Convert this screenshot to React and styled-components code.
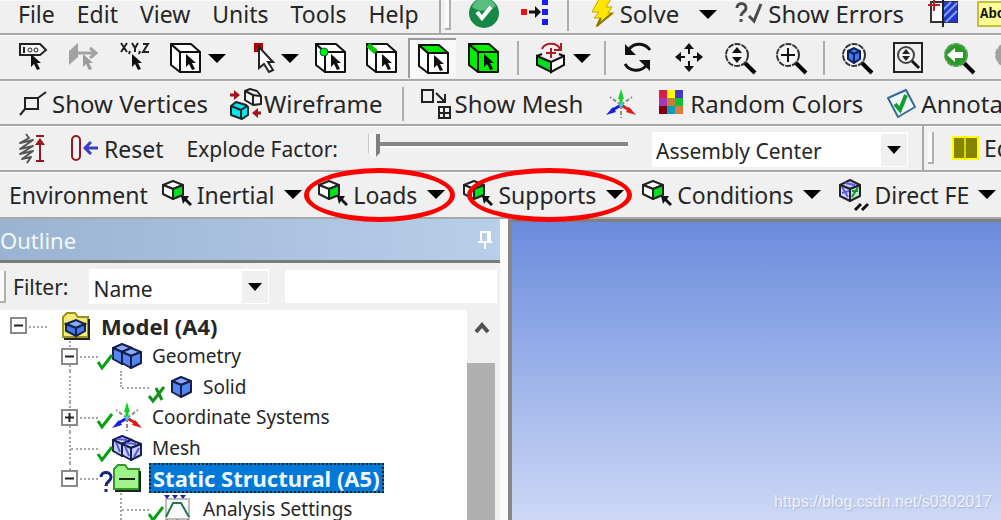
import React, { useState } from 'react';
import styled, { createGlobalStyle, css } from 'styled-components';

const GlobalStyle = createGlobalStyle`
  * {
    box-sizing: border-box;
  }
  body {
    margin: 0;
    background: #f0f0f0;
    overflow: hidden;
  }
`;

const Page = styled.div`
  display: flex;
  flex-direction: column;
  height: 100vh;
  overflow: hidden;
  color: #262626;
  font-family: 'Noto Sans', 'Open Sans', sans-serif;
  font-size: 23px;
  line-height: 28px;
`;

const Band = styled.div`
  display: flex;
  flex: none;
`;

const Toolbar = styled.div`
  display: flex;
  flex: ${(p) => (p.$grow ? '1 0 auto' : 'none')};
  align-items: center;
  height: ${(p) => p.$height || 46}px;
  padding: ${(p) => p.$pad || '0'};
  border-bottom: 2px solid #a8a8a8;
  border-right: ${(p) => (p.$edge ? '2px solid #a8a8a8' : 'none')};
  box-shadow: inset 0 1px 0 #fafafa;
  font-size: ${(p) => (p.$large ? 24 : 23)}px;
  white-space: nowrap;
`;

const Tool = styled.button`
  display: flex;
  flex: none;
  align-items: center;
  gap: ${(p) => p.$gap || 4}px;
  margin: 0 0 0 ${(p) => p.$ml || 0}px;
  padding: 0;
  border: 0;
  background: none;
  color: inherit;
  font: inherit;
  position: relative;
  ${(p) =>
    p.$pressed &&
    css`
      height: 40px;
      margin: 0 -7px 0 10px;
      padding: 0 6px 0 8px;
      border: solid #9c9c9c;
      border-width: 2px 0 0 2px;
      background: #f8f8f8;
    `}
`;

const Tail = styled.span`
  margin-left: 5px;
`;

const Divider = styled.span`
  flex: none;
  width: 2px;
  height: 34px;
  margin-left: ${(p) => p.$ml || 0}px;
  background: #adadad;
`;

const Grip = styled.span`
  flex: none;
  width: 6px;
  height: 32px;
  margin-left: ${(p) => p.$ml || 0}px;
  border: solid #b0b0b0;
  border-width: 0 2px 2px 0;
  background: #fafafa;
`;

const Svg = styled.svg`
  display: block;
  flex: none;
  overflow: visible;
`;

const Label = styled.label`
  flex: none;
  margin-left: ${(p) => p.$ml || 0}px;
  font-size: 21px;
`;

const Ring = styled.span`
  position: absolute;
  inset: ${(p) => (p.$inner ? '-12px -8px -12px 4px' : '-12px -10px -12px -14px')};
  border: 5px solid #fe0000;
  border-radius: 50%;
  pointer-events: none;
  z-index: 2;
`;

const Slider = styled.input`
  appearance: none;
  flex: none;
  width: 260px;
  height: 30px;
  margin: 0 0 8px ${(p) => p.$ml}px;
  background: none;
  &::-webkit-slider-runnable-track {
    height: 6px;
    border-top: 4px solid #868686;
    border-bottom: 2px solid #fcfcfc;
  }
  &::-webkit-slider-thumb {
    appearance: none;
    width: 12px;
    height: 25px;
    margin-top: -12px;
    background: linear-gradient(90deg, #c8c8c8 1px, #f6f6f6 1px, #f6f6f6 8px, #7e7e7e 8px);
    clip-path: polygon(0 0, 100% 0, 100% 75%, 50% 100%, 0 75%);
  }
`;

const SelectBox = styled.span`
  display: flex;
  flex: none;
  position: relative;
  width: ${(p) => p.$width}px;
  height: 35px;
  margin-left: ${(p) => p.$ml}px;
  background: #fff;
  &::after {
    content: '';
    position: absolute;
    top: 2px;
    right: 1px;
    width: 26px;
    height: 32px;
    background: #f0f0f0;
    pointer-events: none;
  }
  svg {
    position: absolute;
    top: 14px;
    right: 7px;
    z-index: 1;
    pointer-events: none;
  }
`;

const Select = styled.select`
  appearance: none;
  width: 100%;
  padding: 4px 4px 0;
  border: 0;
  background: none;
  color: inherit;
  font: inherit;
  font-size: 21px;
`;

const Main = styled.div`
  display: flex;
  flex: 1;
  min-height: 0;
`;

const Panel = styled.aside`
  display: flex;
  flex: none;
  flex-direction: column;
  width: 500px;
`;

const PanelTitle = styled.h2`
  display: flex;
  flex: none;
  align-items: center;
  justify-content: space-between;
  height: 44px;
  margin: 0;
  padding: 0 7px 0 0;
  border-bottom: 3px solid #7b7b7b;
  background: linear-gradient(90deg, #9ab3d0, #b8cfea);
  color: #f4f8fd;
  font-size: 22px;
  font-weight: 400;
`;

const FilterRow = styled.div`
  display: flex;
  flex: none;
  align-items: center;
  height: 47px;
  padding-right: 3px;
`;

const FilterInput = styled.input`
  flex: 1;
  min-width: 0;
  height: 33px;
  margin-left: 16px;
  border: 0;
  background: #fff;
  font: inherit;
`;

const TreeArea = styled.div`
  display: flex;
  flex: 1;
  min-height: 0;
  padding-right: 3px;
`;

const Tree = styled.ul`
  flex: 1;
  margin: 0;
  padding: 0;
  overflow: hidden;
  background: #fff;
  list-style: none;
  font-size: 19px;
  line-height: 20px;
`;

const TreeRow = styled.li`
  display: flex;
  align-items: center;
  height: 31px;
  white-space: nowrap;
  &:nth-child(even) {
    height: 30px;
  }
`;

const Guide = styled.span`
  display: flex;
  flex: none;
  align-items: center;
  align-self: stretch;
  position: relative;
  width: 51px;
  &::before {
    content: '';
    position: absolute;
    left: 18px;
    top: 0;
    bottom: ${(p) => (p.$end ? '50%' : '0')};
    border-left: ${(p) => (p.$line ? '2px dotted #a6a6a6' : '0')};
  }
  &::after {
    content: '';
    position: absolute;
    left: 20px;
    right: 4px;
    top: 50%;
    border-top: ${(p) => (p.$branch ? '2px dotted #a6a6a6' : '0')};
  }
`;

const Expander = styled.button`
  position: relative;
  z-index: 1;
  width: 17px;
  height: 17px;
  margin-left: 10px;
  padding: 0;
  border: 2px solid #8a8a8a;
  background: #fff;
  svg {
    width: 13px;
    height: 13px;
  }
`;

const NodeIcon = styled.span`
  display: flex;
  flex: none;
  justify-content: center;
  position: relative;
  width: 30px;
  margin: 0 10px;
`;

const Status = styled.span`
  position: absolute;
  left: -15px;
  top: 10px;
`;

const NodeText = styled.span`
  ${(p) =>
    p.$bold &&
    css`
      font-size: 22px;
      font-weight: 700;
    `}
  ${(p) =>
    p.$selected &&
    css`
      margin-left: -3px;
      padding: 0 2px;
      line-height: 26px;
      border: 2px dotted #222;
      background: #0078d7;
      color: #eef6ff;
    `}
`;

const Scrollbar = styled.div`
  display: flex;
  flex: none;
  flex-direction: column;
  width: 30px;
  background: #f0f0f0;
`;

const ScrollUp = styled.button`
  display: flex;
  align-items: center;
  justify-content: center;
  height: 53px;
  padding: 0 0 18px;
  border: 0;
  background: none;
`;

const ScrollThumb = styled.div`
  flex: 1;
  width: 28px;
  background: #b0b0b0;
`;

const Splitter = styled.div`
  flex: none;
  width: 12px;
  border-right: 4px solid #868686;
  background: #fbfbfb;
`;

const Viewport = styled.main`
  display: flex;
  flex: 1;
  align-items: flex-end;
  justify-content: flex-end;
  min-width: 0;
  padding: 0 9px 8px;
  border-top: 3px solid #808080;
  background: linear-gradient(#6b8bdd, #ccd8f5);
`;

const Watermark = styled.span`
  color: #edf1fb;
  font-family: 'Liberation Sans', Arial, sans-serif;
  font-size: 16px;
  line-height: 20px;
  text-shadow: 1px 1px 1px #a9b5d0;
`;

const NoteTag = styled.span`
  width: 40px;
  padding-left: 1px;
  border: 2px solid #c8bc3c;
  background: #ffff96;
  color: #111;
  font: 700 14px/22px 'Liberation Mono', monospace;
  text-align: left;
`;

function Icon({ w = 32, h = 32, children }) {
  return (
    <Svg width={w} height={h} viewBox={`0 0 ${w} ${h}`} fill="none" aria-hidden="true">
      {children}
    </Svg>
  );
}

const Triangle = ({ w = 18, h = 9 }) => (
  <Icon w={w} h={h}>
    <path d={`M0 0H${w}L${w / 2} ${h}z`} fill="#000" />
  </Icon>
);

const Pointer = ({ x = 0, y = 0, fill = '#111' }) => (
  <path d="M0 0v13l3-3 3 6 3-1-3-6h4z" transform={`translate(${x} ${y})`} fill={fill} />
);

function SelectCube({ face, body, vertex, edge }) {
  return (
    <Icon>
      <g stroke="#111" strokeWidth="2" strokeLinejoin="round">
        <path d="M1 2l9 8v20l-9-7z" fill={body || '#fff'} />
        <path d="M1 2h20l9 8H10z" fill={face || body || '#fff'} />
        <path d="M10 10h20v20H10z" fill={body || '#fff'} />
      </g>
      {edge && <path d="M2 3l8 7" stroke="#00c800" strokeWidth="5" />}
      {vertex && <circle cx="9" cy="10" r="4" fill="#00f000" stroke="#064" />}
      <Pointer x={16} y={12} />
    </Icon>
  );
}

const TagIcon = () => (
  <Icon>
    <path d="M3 2h20l6 6-6 5H3z" stroke="#222" strokeWidth="2" fill="#f8f8f8" />
    <path d="M7 5v6" stroke="#222" strokeWidth="2" />
    <circle cx="13" cy="8" r="2" stroke="#222" />
    <circle cx="19" cy="8" r="2" stroke="#222" />
    <Pointer x={14} y={12} />
  </Icon>
);

const DirectionIcon = () => (
  <Icon>
    <path d="M1 9l9-8v14l-9 8z" fill="#a2a2a2" />
    <path d="M10 11h16M22 6l6 5-6 5" stroke="#a2a2a2" strokeWidth="3" />
    <Pointer x={15} y={12} fill="#9a9a9a" />
  </Icon>
);

const CoordIcon = () => (
  <Icon>
    <path
      d="M2 1l6 9M8 1l-6 9M13 1l3 5 3-5M16 6v4M24 2h5l-5 8h6M11 9l-1 3M21 9l-1 3"
      stroke="#222"
      strokeWidth="2"
    />
    <Pointer x={13} y={12} />
  </Icon>
);

const ArrowPickIcon = () => (
  <Icon w={26}>
    <path d="M3 1h9v9H3z" fill="#b00000" />
    <path d="M8 5v21l5-4 5 8 4-2-5-8h5z" fill="#fff" stroke="#222" strokeWidth="2" />
  </Icon>
);

const ExtendIcon = () => (
  <Icon>
    <path d="M2 14l14 6v10L2 23z" fill="#00dc20" stroke="#111" strokeWidth="2" />
    <path d="M16 20l13-6v9l-13 7z" fill="#fff" stroke="#111" strokeWidth="2" />
    <path d="M2 14l5-2M24 12l5 2" stroke="#111" strokeWidth="2" />
    <path d="M7 7c3-7 15-7 18 0M26 1v7h-7M16 6v10M11 11h10" stroke="#b31b24" strokeWidth="2" />
  </Icon>
);

const RotateIcon = () => (
  <Icon>
    <path d="M28 8C23 1 13 0 7 7M3 22c5 8 15 8 21 2" stroke="#111" strokeWidth="3" />
    <path d="M3 2v11h11zM28 29V18H17z" fill="#111" />
  </Icon>
);

const PanIcon = () => (
  <Icon>
    <path d="M16 3v9M16 19v9M4 15h8M20 15h8" stroke="#111" strokeWidth="2" />
    <path d="M16 1l5 6H11zM16 30l5-6H11zM2 15l6-5v10zM30 15l-6-5v10z" fill="#111" />
  </Icon>
);

const Lens = ({ children, fill = '#f6f6f6', stroke = '#333' }) => (
  <Icon>
    <path d="M20 20l11 11" stroke="#000" strokeWidth="4" />
    <circle cx="13" cy="13" r="11" fill={fill} stroke={stroke} strokeWidth="2" strokeDasharray="6 1" />
    {children}
  </Icon>
);

const BoxZoomIcon = () => (
  <Icon>
    <path d="M2 1h28v29H2z" stroke="#222" strokeWidth="2" />
    <circle cx="14" cy="13" r="8" fill="#f8f8f8" stroke="#444" strokeWidth="2" />
    <path d="M14 7l4 5h-8zM14 19l4-5h-8z" fill="#222" />
    <path d="M20 19l7 7" stroke="#111" strokeWidth="3" />
  </Icon>
);

const CheckBallIcon = () => (
  <Icon w={30} h={30}>
    <circle cx="15" cy="14" r="15" fill="#168746" />
    <path d="M3 8a13 13 0 0124-1c-7 5-16 7-24 1z" fill="#58bd7e" />
    <path d="M8 13l5 6 9-11" stroke="#fff" strokeWidth="4" />
  </Icon>
);

const ConnectIcon = () => (
  <Icon w={30} h={30}>
    <path d="M1 10h6v6H1z" fill="#f01010" />
    <path d="M22 0h6v6h-6zM22 10h6v6h-6zM22 20h6v6h-6z" fill="#1520f0" />
    <path d="M9 13h9" stroke="#111" strokeWidth="3" />
    <path d="M15 7l6 6-6 6z" fill="#111" />
  </Icon>
);

const BoltIcon = () => (
  <Icon w={24} h={30}>
    <path d="M8 0h12l-5 8h6l-4 6h6L5 28l4-9H3l5-6H1z" fill="#ffe600" stroke="#c9a500" />
    <path d="M21 14L6 27l4-8" stroke="#8d7600" strokeWidth="2" />
  </Icon>
);

const QueryIcon = () => (
  <Icon w={29} h={24}>
    <path d="M2 6c0-6 9-6 9 0 0 4-5 4-5 8M6 17v3" stroke="#4c4c4c" strokeWidth="3" />
    <path d="M14 14l5 5 7-17" stroke="#4c4c4c" strokeWidth="3" />
  </Icon>
);

const SectionIcon = () => (
  <Icon w={32} h={30}>
    <path d="M4 3h26v20H4z" stroke="#333" strokeWidth="2" fill="#fff" />
    <path d="M16 3h14v20H16z" fill="#2438c8" />
    <path d="M16 11l8-8M16 18L30 4M19 23l11-11" stroke="#7da0ff" strokeWidth="2" />
    <path d="M16 0v28" stroke="#222" strokeWidth="2" />
    <path d="M7 0v12M1 6h12" stroke="#c01e28" strokeWidth="2" />
  </Icon>
);

const VertexIcon = () => (
  <Icon w={28} h={24}>
    <path d="M5 6h13v11H5zM18 6l8-6M5 17l-5 6" stroke="#222" strokeWidth="2" />
  </Icon>
);

const WireIcon = () => (
  <Icon>
    <g stroke="#222" strokeWidth="2" strokeLinejoin="round">
      <path d="M15 3l5-2 7 2 4 5v8l-8 1-8-5z" fill="#f4f4f4" />
      <path d="M15 3l8 4v10M23 7l7 1" />
      <path d="M1 18l5-4 10 3 2 2v8l-6 4-11-4z" fill="#00e8f0" />
      <path d="M1 18l10 4v8M11 22l6-4" />
    </g>
    <path d="M0 7h5M26 25h5" stroke="#a4141c" strokeWidth="3" />
    <path d="M4 2l6 5-6 5zM28 20l-6 5 6 5z" fill="#a4141c" />
  </Icon>
);

const MeshIcon = () => (
  <Icon>
    <path d="M2 2h11v12H2zM19 19h11v11H19zM24 19v11M19 25h11" stroke="#222" strokeWidth="2" />
    <path d="M16 5l8 8M25 6v8h-8" stroke="#222" strokeWidth="2" />
  </Icon>
);

const TriadIcon = () => (
  <Icon w={30} h={30}>
    <path d="M15 16L4 8M15 16l11-8M15 16v13" stroke="#8d8d8d" strokeWidth="2" strokeDasharray="4 2" />
    <path d="M15 16V6" stroke="#12d025" strokeWidth="3" />
    <path d="M15 0l3 10h-6z" fill="#12d025" />
    <path d="M15 16L5 22" stroke="#1722d8" strokeWidth="3" />
    <path d="M0 26l7-8 3 5z" fill="#1722d8" />
    <path d="M15 16l10 6" stroke="#e01a1a" strokeWidth="3" />
    <path d="M30 26l-10-3 3-5z" fill="#e01a1a" />
    <circle cx="15" cy="16" r="2" fill="#2fd8e8" />
  </Icon>
);

const swatches = ['#e01848', '#ffff00', '#4038c8', '#a838b8', '#c08038', '#10c030', '#800010', '#00a0c0', '#e07838'];

const SwatchIcon = () => (
  <Icon w={24} h={24}>
    {swatches.map((c, i) => (
      <rect key={c} x={(i % 3) * 8} y={Math.floor(i / 3) * 8 - 2} width="8" height="8" fill={c} />
    ))}
  </Icon>
);

const AnnotationIcon = () => (
  <Icon w={30} h={30}>
    <path d="M1 9l18-8 9 17-17 10z" fill="#f2f7fb" stroke="#356b98" strokeWidth="2" strokeLinejoin="round" />
    <path d="M8 15l5 6 6-15" stroke="#12a024" strokeWidth="4" />
  </Icon>
);

const SpringIcon = () => (
  <Icon w={28} h={32}>
    <path
      d="M8 1l3 4-9 5 13-3-13 9 13-3-13 8 13-3-11 8 9-2-4 6"
      stroke="#555"
      strokeWidth="2"
      strokeLinejoin="round"
    />
    <path d="M18 3h8M18 28h8M22 7v20" stroke="#981820" strokeWidth="2" />
    <path d="M22 5l5 7H17z" fill="#981820" />
  </Icon>
);

const ResetIcon = () => (
  <Icon w={29} h={28}>
    <rect x="2" y="1" width="8" height="24" rx="4" stroke="#8f1a22" strokeWidth="2" />
    <path d="M28 13H15M21 7l-6 6 6 6" stroke="#3c3ec4" strokeWidth="3" />
  </Icon>
);

const BookIcon = () => (
  <Icon w={27} h={25}>
    <path d="M1 1h25v22H1z" fill="#848400" stroke="#ffff00" strokeWidth="2" />
    <path d="M13 1v22" stroke="#d8d800" strokeWidth="2" />
  </Icon>
);

const LoadIcon = () => (
  <Icon w={30} h={30}>
    <g stroke="#222" strokeWidth="2" strokeLinejoin="round">
      <path d="M1 5l10-4 10 4-10 4z" fill="#fff" />
      <path d="M1 5l10 4v10L1 14z" fill="#fff" />
      <path d="M11 9l10-4v10l-10 4z" fill="#00e020" />
    </g>
    <path d="M19 16h8l-2 3 5 5-2 2-5-5-2 3z" fill="#111" />
  </Icon>
);

const DirectIcon = () => (
  <Icon w={31} h={32}>
    <g stroke="#222" strokeWidth="2" strokeLinejoin="round">
      <path d="M1 6l10-5 10 5-10 4z" fill="#c6c8ff" />
      <path d="M1 6l10 4v12L1 17z" fill="#d6d8ff" />
      <path d="M11 10l10-4v11l-10 5z" fill="#bde8c8" />
    </g>
    <path d="M3 8l6 10M6 4l10 2M3 14l7-2" stroke="#5a5ae8" strokeWidth="2" />
    <path d="M13 18l6-10M13 12h6" stroke="#1d8a3e" strokeWidth="2" />
    <path d="M16 31l6-6M23 31l6-6" stroke="#111" strokeWidth="3" />
  </Icon>
);

const BluePrism = ({ x = 0, y = 0, fill = '#5585f0', top = '#86abff', meshed }) => (
  <g transform={`translate(${x} ${y})`} stroke="#15204e" strokeWidth="2" strokeLinejoin="round">
    <path d="M1 5l9-4 10 4-10 4z" fill={top} />
    <path d="M1 5l9 4v12l-9-5z" fill={fill} />
    <path d="M10 9l10-4v11l-10 5z" fill={fill} />
    {meshed && <path d="M4 7l4 10M13 18l5-9M5 4l10 1" stroke="#5257d8" strokeWidth="2" />}
  </g>
);

const ModelIcon = () => (
  <Icon w={30} h={30}>
    <path d="M2 6l4-4h8l3 4h10v20H2z" fill="#f4ea78" stroke="#9d9023" strokeWidth="2" />
    <path d="M3 28h25V8" stroke="#222" strokeWidth="2" />
    <path d="M5 13l10-4 9 4-9 4z" fill="#86abff" stroke="#15204e" strokeWidth="2" />
    <path d="M5 13l10 4v8L5 20zM24 13l-9 4v8l9-5z" fill="#4679ea" stroke="#15204e" strokeWidth="2" />
  </Icon>
);

const GeometryIcon = () => (
  <Icon w={30} h={26}>
    <BluePrism y={0} />
    <BluePrism x={9} y={4} />
  </Icon>
);

const MeshNodeIcon = () => (
  <Icon w={30} h={26}>
    <BluePrism fill="#c9cbfa" top="#dcdeff" meshed />
    <BluePrism x={9} y={4} fill="#c9cbfa" top="#dcdeff" meshed />
  </Icon>
);

const SolidIcon = () => (
  <Icon w={30} h={22}>
    <BluePrism x={8} />
  </Icon>
);

const FolderIcon = () => (
  <Icon w={30} h={28}>
    <path d="M2 5l4-4h7l3 4h11v20H2z" fill="#a2f28c" stroke="#2c9a24" strokeWidth="2" />
    <path d="M3 27h25V7" stroke="#222" strokeWidth="2" />
    <path d="M7 15h16" stroke="#222" strokeWidth="2" />
  </Icon>
);

const AnalysisIcon = () => (
  <Icon w={28} h={28}>
    <path d="M2 4h23v20H2z" fill="#fafafa" stroke="#bcbcbc" strokeWidth="2" />
    <path d="M2 22L9 8h8l8 14" stroke="#207850" strokeWidth="2" />
    <path d="M0 0h6l-3 4zM8 0h6l-3 4zM16 0h6l-3 4z" fill="#1828a8" />
    <path d="M0 28l3-4 3 4zM10 28l3-4 3 4zM21 28l3-4 3 4z" fill="#b01020" />
  </Icon>
);

const statusIcons = {
  check: <path d="M1 9l4 6L15 2" stroke="#08a010" strokeWidth="3" />,
  cross: <path d="M1 10l4 5L16 1M8 2l6 12" stroke="#129018" strokeWidth="3" />,
  query: <path d="M4 3c0-6 10-6 10 0 0 5-5 4-5 9M9 15v3" stroke="#16247e" strokeWidth="3" />,
};

const nodes = [
  { text: 'Model (A4)', level: 0, open: true, bold: true, icon: ModelIcon },
  { text: 'Geometry', level: 1, open: true, status: 'check', icon: GeometryIcon },
  { text: 'Solid', level: 2, end: true, status: 'cross', icon: SolidIcon },
  { text: 'Coordinate Systems', level: 1, open: false, status: 'check', icon: TriadIcon },
  { text: 'Mesh', level: 1, status: 'check', icon: MeshNodeIcon },
  {
    text: 'Static Structural (A5)',
    level: 1,
    open: true,
    end: true,
    status: 'query',
    icon: FolderIcon,
    bold: true,
    selected: true,
  },
  { text: 'Analysis Settings', level: 2, last: true, status: 'check', icon: AnalysisIcon },
];

function TreeNode({ node }) {
  const NodeGlyph = node.icon;
  return (
    <TreeRow>
      {Array.from({ length: node.level + 1 }, (_, i) => {
        const own = i === node.level;
        return (
          <Guide key={i} $line={own ? node.level > 0 : i > 0 && !node.last} $branch={own} $end={own && node.end}>
            {own && node.open !== undefined && (
              <Expander aria-label={node.open ? 'Collapse' : 'Expand'}>
                <Icon w={13} h={13}>
                  <path d={node.open ? 'M2 6.5h9' : 'M2 6.5h9M6.5 2v9'} stroke="#222" strokeWidth="2" />
                </Icon>
              </Expander>
            )}
          </Guide>
        );
      })}
      <NodeIcon>
        <NodeGlyph />
        {node.status && (
          <Status>
            <Icon w={17} h={19}>{statusIcons[node.status]}</Icon>
          </Status>
        )}
      </NodeIcon>
      <NodeText $bold={node.bold} $selected={node.selected}>
        {node.text}
      </NodeText>
    </TreeRow>
  );
}

const environmentMenus = [
  { text: 'Inertial', ml: 14 },
  { text: 'Loads', ml: 16, ring: true },
  { text: 'Supports', ml: 18, ring: true, inner: true },
  { text: 'Conditions', ml: 18 },
];

function App() {
  const [explode, setExplode] = useState(0);

  return (
    <Page>
      <GlobalStyle />
      <Band>
        <Toolbar as="nav" $height={35} $pad="0 20px 5px 18px" $edge>
          {['File', 'Edit', 'View', 'Units', 'Tools', 'Help'].map((item, i) => (
            <Tool key={item} $ml={i ? 22 : 0}>
              {item}
            </Tool>
          ))}
        </Toolbar>
        <Toolbar $grow $large $height={35} $pad="0 0 5px 4px">
          <Grip />
          <Tool $ml={18} aria-label="Check"><CheckBallIcon /></Tool>
          <Tool $ml={21} aria-label="Connect"><ConnectIcon /></Tool>
          <Divider $ml={17} />
          <Tool $ml={22} $gap={5}><BoltIcon />Solve</Tool>
          <Tool $ml={20} aria-label="Solve options"><Triangle /></Tool>
          <Tool $ml={18}><QueryIcon />Show Errors</Tool>
          <Tool $ml={23} aria-label="Section plane"><SectionIcon /></Tool>
          <Tool $ml={18} aria-label="Annotation text"><NoteTag>Abc</NoteTag></Tool>
        </Toolbar>
      </Band>

      <Toolbar $height={46} $pad="2px 0 0 17px">
        <Tool aria-label="Label"><TagIcon /></Tool>
        <Tool $ml={19} aria-label="Direction"><DirectionIcon /></Tool>
        <Tool $ml={19} aria-label="Coordinates"><CoordIcon /></Tool>
        <Tool $ml={19} $gap={6} aria-label="Select mode"><SelectCube /><Triangle /></Tool>
        <Tool $ml={25} $gap={4} aria-label="Select type"><ArrowPickIcon /><Triangle /></Tool>
        <Tool $ml={16} aria-label="Vertex"><SelectCube vertex /></Tool>
        <Tool $ml={19} aria-label="Edge"><SelectCube edge /></Tool>
        <Tool $pressed aria-label="Face"><SelectCube face="#00e800" /></Tool>
        <Tool $ml={19} aria-label="Body"><SelectCube body="#00f000" /></Tool>
        <Divider $ml={17} />
        <Tool $ml={16} $gap={6} aria-label="Extend"><ExtendIcon /><Triangle /></Tool>
        <Divider $ml={13} />
        <Tool $ml={16} aria-label="Rotate"><RotateIcon /></Tool>
        <Tool $ml={19} aria-label="Pan"><PanIcon /></Tool>
        <Tool $ml={19} aria-label="Zoom">
          <Lens><path d="M13 5l5 6H8zM13 21l5-6H8z" fill="#111" /></Lens>
        </Tool>
        <Tool $ml={19} aria-label="Zoom in">
          <Lens><path d="M13 6v14M6 13h14" stroke="#111" strokeWidth="2" /></Lens>
        </Tool>
        <Divider $ml={16} />
        <Tool $ml={16} aria-label="Fit">
          <Lens>
            <path d="M7 9l6-3 6 3v8l-6 4-6-4z" fill="#3c78ec" stroke="#101e5a" strokeWidth="2" />
            <path d="M7 9l6 3 6-3M13 12v8" stroke="#101e5a" strokeWidth="2" />
          </Lens>
        </Tool>
        <Tool $ml={19} aria-label="Box zoom"><BoxZoomIcon /></Tool>
        <Tool $ml={19} aria-label="Previous view">
          <Lens fill="#2a9a2a" stroke="#4f9d4b">
            <path d="M4 13l8-7v4h8v6h-8v4z" fill="#fff" />
          </Lens>
        </Tool>
        <Tool $ml={19} aria-label="Next view">
          <Lens fill="#a2a2a2" stroke="#a2a2a2" />
        </Tool>
      </Toolbar>

      <Toolbar $large $height={45} $pad="3px 0 0 20px">
        <Tool><VertexIcon />Show Vertices</Tool>
        <Tool $ml={22} $gap={2}><WireIcon />Wireframe</Tool>
        <Divider $ml={19} />
        <Tool $ml={16} $gap={3}><MeshIcon />Show Mesh</Tool>
        <Tool $ml={23} aria-label="Triad"><TriadIcon /></Tool>
        <Tool $ml={23} $gap={7}><SwatchIcon />Random Colors</Tool>
        <Tool $ml={24}><AnnotationIcon />Annotation</Tool>
      </Toolbar>

      <Band>
        <Toolbar $height={46} $pad="2px 14px 0 18px" $edge>
          <Tool aria-label="Scale"><SpringIcon /></Tool>
          <Tool $ml={24} $gap={5}><ResetIcon />Reset</Tool>
          <Label $ml={23} htmlFor="explode">Explode Factor:</Label>
          <Slider
            id="explode"
            $ml={30}
            type="range"
            min="0"
            max="100"
            value={explode}
            onChange={(e) => setExplode(Number(e.target.value))}
          />
          <SelectBox $ml={24} $width={256}>
            <Select aria-label="Assembly Center">
              <option>Assembly Center</option>
            </Select>
            <Triangle w={14} h={8} />
          </SelectBox>
        </Toolbar>
        <Toolbar $grow $height={46} $pad="0 0 0 4px">
          <Grip />
          <Tool $ml={18} $gap={5}><BookIcon />Edge</Tool>
        </Toolbar>
      </Band>

      <Toolbar $height={47} $pad="0 0 0 9px">
        <span>Environment</span>
        {environmentMenus.map((menu) => (
          <Tool key={menu.text} $ml={menu.ml} $gap={5}>
            <LoadIcon />
            {menu.text}
            <Tail><Triangle /></Tail>
            {menu.ring && <Ring $inner={menu.inner} />}
          </Tool>
        ))}
        <Tool $ml={18} $gap={4}>
          <DirectIcon />
          Direct FE
          <Tail><Triangle /></Tail>
        </Tool>
      </Toolbar>

      <Main>
        <Panel>
          <PanelTitle>
            Outline
            <Icon w={16} h={20}>
              <path d="M4 2h9v10H4zM11 2v10M1 12h14M8 12v7" stroke="#fff" strokeWidth="2" />
            </Icon>
          </PanelTitle>
          <FilterRow>
            <Grip />
            <Label $ml={7} htmlFor="filter">Filter:</Label>
            <SelectBox $ml={21} $width={180}>
              <Select id="filter">
                <option>Name</option>
              </Select>
              <Triangle w={14} h={8} />
            </SelectBox>
            <FilterInput aria-label="Filter text" />
          </FilterRow>
          <TreeArea>
            <Tree>
              {nodes.map((node) => (
                <TreeNode key={node.text} node={node} />
              ))}
            </Tree>
            <Scrollbar>
              <ScrollUp aria-label="Scroll up">
                <Icon w={15} h={12}>
                  <path d="M1 10l6-7 6 7" stroke="#505050" strokeWidth="4" />
                </Icon>
              </ScrollUp>
              <ScrollThumb />
            </Scrollbar>
          </TreeArea>
        </Panel>
        <Splitter />
        <Viewport>
          <Watermark>https://blog.csdn.net/s0302017</Watermark>
        </Viewport>
      </Main>
    </Page>
  );
}

export default App;
